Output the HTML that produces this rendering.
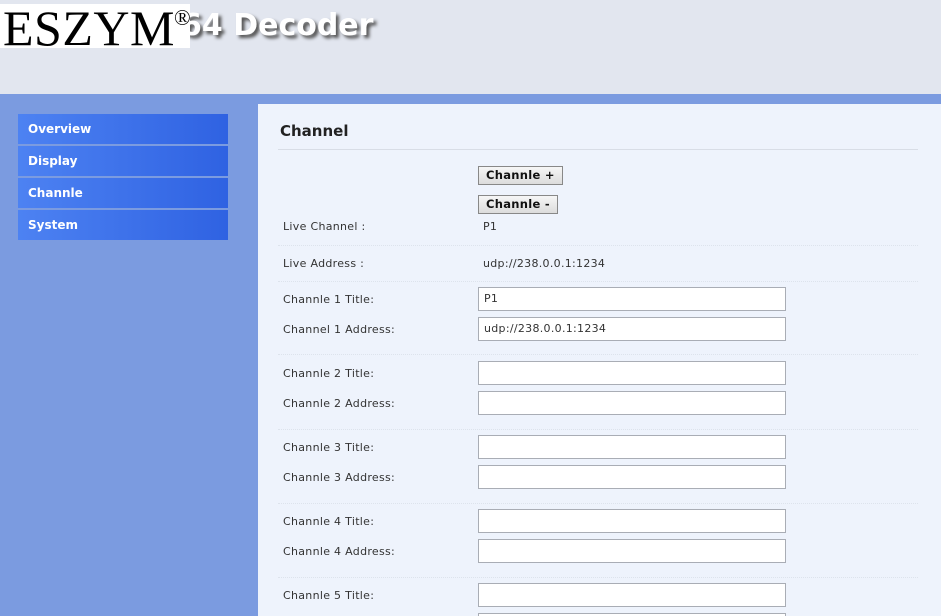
<!DOCTYPE html>
<html style="overflow:hidden;height:616px"><head><style>
body{margin:0;width:941px;height:616px;overflow:hidden;background:#7b9be0;font-family:Verdana,"DejaVu Sans",sans-serif;position:relative}
#hdr{position:absolute;left:0;top:0;width:941px;height:94px;background:#e2e6ef}
#dec{position:absolute;left:181px;top:8px;font:bold 30px "DejaVu Sans",sans-serif;color:#fff;text-shadow:3px 3px 3px #555}
#logo{position:absolute;left:0;top:4px;width:190px;height:44px;background:#fff;font:50px "Liberation Serif",serif;color:#000;line-height:48px;padding-left:3px;box-sizing:border-box;letter-spacing:0.5px}
#logo sup{font-size:22px;position:absolute;left:174px;top:-10px}
.nav{position:absolute;left:18px;width:210px;height:30px;background:linear-gradient(90deg,#4d82f2,#2f62e2);color:#fff;font-weight:bold;font-size:12px;line-height:30px;padding-left:10px;box-sizing:border-box}
#main{position:absolute;left:258px;top:104px;width:683px;height:512px;background:#eef3fc;overflow:hidden}
h1{position:absolute;left:22px;top:18px;margin:0;font-size:15px;font-weight:bold;color:#222}
.hr{position:absolute;left:20px;width:640px;height:0;border-top:1px solid #d8dde6}
.dl{position:absolute;left:20px;width:640px;border-top:1px dotted #dde3ec}
.lb{position:absolute;left:25px;font-size:11px;color:#333;letter-spacing:0.3px}
.vl{position:absolute;left:225px;font-size:11px;color:#333;letter-spacing:0.3px}
.in{position:absolute;left:220px;width:308px;height:24px;background:#fff;border:1px solid #a9adb5;box-sizing:border-box;font-size:11px;line-height:22px;padding-left:5px;color:#333;letter-spacing:0.3px}
.bt{position:absolute;left:220px;height:19px;background:linear-gradient(#f6f6f6,#dcdcdc);border:1px solid #888;box-sizing:border-box;font-size:11.5px;font-weight:bold;line-height:17px;padding:0 7px;color:#111;letter-spacing:0.3px}
</style></head><body>
<div id="hdr"></div>
<div id="dec">64 Decoder</div>
<div id="logo">ESZYM<sup>®</sup></div>
<div class="nav" style="top:114px">Overview</div>
<div class="nav" style="top:146px">Display</div>
<div class="nav" style="top:178px">Channle</div>
<div class="nav" style="top:210px">System</div>
<div id="main">
<h1>Channel</h1>
<div class="hr" style="top:45px"></div>
<div class="bt" style="top:62px">Channle +</div>
<div class="bt" style="top:91px">Channle -</div>
<div class="lb" style="top:116px">Live Channel :</div><div class="vl" style="top:116px">P1</div>
<div class="dl" style="top:141px"></div>
<div class="lb" style="top:153px">Live Address :</div><div class="vl" style="top:153px">udp://238.0.0.1:1234</div>
<div class="dl" style="top:177px"></div>
<div class="lb" style="top:189px">Channle 1 Title:</div><div class="in" style="top:183px">P1</div>
<div class="lb" style="top:219px">Channel 1 Address:</div><div class="in" style="top:213px">udp://238.0.0.1:1234</div>
<div class="dl" style="top:250px"></div>
<div class="lb" style="top:263px">Channle 2 Title:</div><div class="in" style="top:257px"></div>
<div class="lb" style="top:293px">Channle 2 Address:</div><div class="in" style="top:287px"></div>
<div class="dl" style="top:325px"></div>
<div class="lb" style="top:337px">Channle 3 Title:</div><div class="in" style="top:331px"></div>
<div class="lb" style="top:367px">Channle 3 Address:</div><div class="in" style="top:361px"></div>
<div class="dl" style="top:399px"></div>
<div class="lb" style="top:411px">Channle 4 Title:</div><div class="in" style="top:405px"></div>
<div class="lb" style="top:441px">Channle 4 Address:</div><div class="in" style="top:435px"></div>
<div class="dl" style="top:473px"></div>
<div class="lb" style="top:485px">Channle 5 Title:</div><div class="in" style="top:479px"></div>
<div class="in" style="top:509px"></div>
</div>
</body></html>
